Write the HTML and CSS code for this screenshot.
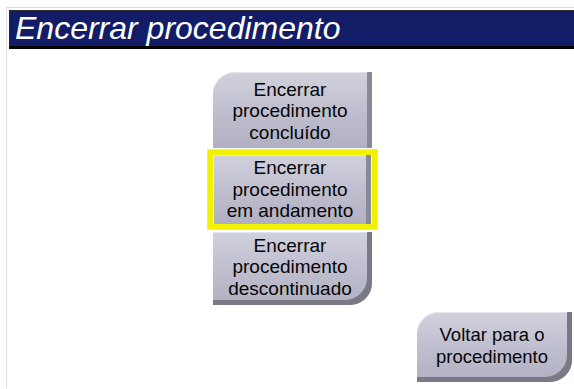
FILE: index.html
```html
<!DOCTYPE html>
<html lang="pt">
<head>
<meta charset="utf-8">
<link rel="stylesheet" href="styles.css">
</head>
<body>
<div class="frame">
  <div class="header"><h1 class="title">Encerrar procedimento</h1></div>
  <div class="content">
    <div class="stack">
      <button class="btn btn-top">Encerrar<br>procedimento<br>concluído</button>
      <div class="selected"><button class="btn btn-mid">Encerrar<br>procedimento<br>em andamento</button></div>
      <button class="btn btn-bottom">Encerrar<br>procedimento<br>descontinuado</button>
    </div>
    <div class="back-row">
      <button class="btn btn-back">Voltar para o<br>procedimento</button>
    </div>
  </div>
</div>
</body>
</html>
```
FILE: styles.css
```css
html, body {
  margin: 0;
  padding: 0;
  background: #ffffff;
  width: 574px;
  height: 389px;
  overflow: hidden;
}
.frame {
  margin: 7px 0 0 6px;
  border-top: 1px solid #dcdcdc;
  border-left: 1px solid #dcdcdc;
  padding: 2px 0 0 2px;
  height: 381px;
  box-sizing: border-box;
}
.header {
  background: #131d67;
  border-top: 1px solid #2a2a2a;
  border-left: 1px solid #2a2a2a;
  border-bottom: 3px solid #050505;
  height: 39px;
  box-sizing: border-box;
  padding-left: 5px;
}
.title {
  margin: 0;
  font-family: "Liberation Sans", Arial, sans-serif;
  font-style: italic;
  font-weight: normal;
  font-size: 32px;
  line-height: 35px;
  color: #ffffff;
}
.content {
  display: flex;
  flex-direction: column;
}
.stack {
  display: flex;
  flex-direction: column;
  align-items: center;
  margin-top: 23px;
  padding-left: 2px;
}
.btn {
  font-family: "Liberation Sans", Arial, sans-serif;
  font-size: 19px;
  line-height: 21.5px;
  color: #050505;
  text-align: center;
  border: none;
  padding: 0 5px 0 0;
  margin: 0;
  width: 159px;
  background: linear-gradient(to bottom, #d2d2de 0%, #c2c2d2 40%, #b0b0c2 100%);
  box-shadow: inset -5px 0 0 #8a8a96, inset 0 1px 0 #e4e4ec;
  display: flex;
  align-items: center;
  justify-content: center;
}
.btn-top {
  height: 76px;
  border-top-left-radius: 22px;
  padding-top: 2px;
}
.selected {
  margin-top: 2px;
  border: 5px solid #f2f200;
  padding: 0 1px 0 1px;
  background: #ffffff;
  box-shadow: 0 0 0 1px #e8e8a0;
}
.btn-mid {
  height: 69px;
  width: 157px;
}
.btn-bottom {
  margin-top: 3px;
  height: 73px;
  border-bottom-right-radius: 22px;
  box-shadow: inset -5px -5px 0 #7a7a86, inset 0 1px 0 #e4e4ec;
  padding-bottom: 3px;
}
.back-row {
  display: flex;
  justify-content: flex-end;
  margin-top: 7px;
  padding-right: 2px;
}
.btn-back {
  width: 155px;
  height: 70px;
  font-size: 18.5px;
  border-top-left-radius: 22px;
  border-bottom-right-radius: 22px;
  box-shadow: inset -5px -5px 0 #7a7a86, inset 0 1px 0 #e4e4ec;
  padding-bottom: 3px;
}
```
